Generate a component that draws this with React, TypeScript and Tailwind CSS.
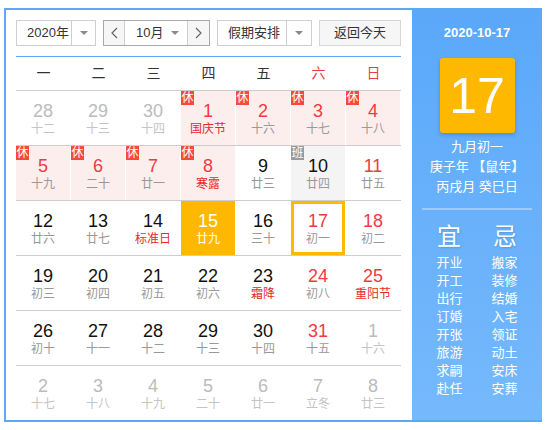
import React from "react";

type Cell = {
  d: number;
  l: string;
  other?: boolean;
  rest?: boolean;
  work?: boolean;
  red?: boolean;
  fest?: boolean;
  today?: boolean;
  sel?: boolean;
};

const rows: Cell[][] = [
  [
    { d: 28, l: "十二", other: true },
    { d: 29, l: "十三", other: true },
    { d: 30, l: "十四", other: true },
    { d: 1, l: "国庆节", rest: true, red: true, fest: true },
    { d: 2, l: "十六", rest: true, red: true },
    { d: 3, l: "十七", rest: true, red: true },
    { d: 4, l: "十八", rest: true, red: true },
  ],
  [
    { d: 5, l: "十九", rest: true, red: true },
    { d: 6, l: "二十", rest: true, red: true },
    { d: 7, l: "廿一", rest: true, red: true },
    { d: 8, l: "寒露", rest: true, red: true, fest: true },
    { d: 9, l: "廿三" },
    { d: 10, l: "廿四", work: true },
    { d: 11, l: "廿五", red: true },
  ],
  [
    { d: 12, l: "廿六" },
    { d: 13, l: "廿七" },
    { d: 14, l: "标准日", fest: true },
    { d: 15, l: "廿九", today: true },
    { d: 16, l: "三十" },
    { d: 17, l: "初一", red: true, sel: true },
    { d: 18, l: "初二", red: true },
  ],
  [
    { d: 19, l: "初三" },
    { d: 20, l: "初四" },
    { d: 21, l: "初五" },
    { d: 22, l: "初六" },
    { d: 23, l: "霜降", fest: true },
    { d: 24, l: "初八", red: true },
    { d: 25, l: "重阳节", red: true, fest: true },
  ],
  [
    { d: 26, l: "初十" },
    { d: 27, l: "十一" },
    { d: 28, l: "十二" },
    { d: 29, l: "十三" },
    { d: 30, l: "十四" },
    { d: 31, l: "十五", red: true },
    { d: 1, l: "十六", other: true },
  ],
  [
    { d: 2, l: "十七", other: true },
    { d: 3, l: "十八", other: true },
    { d: 4, l: "十九", other: true },
    { d: 5, l: "二十", other: true },
    { d: 6, l: "廿一", other: true },
    { d: 7, l: "立冬", other: true },
    { d: 8, l: "廿三", other: true },
  ],
];

const weekdays = ["一", "二", "三", "四", "五", "六", "日"];
const yi = ["开业", "开工", "出行", "订婚", "开张", "旅游", "求嗣", "赴任"];
const ji = ["搬家", "装修", "结婚", "入宅", "领证", "动土", "安床", "安葬"];

const font = { fontFamily: '"Liberation Sans", "Noto Sans CJK SC", sans-serif' };

function Tri() {
  return (
    <svg width="8" height="4" viewBox="0 0 8 4">
      <polygon points="0,0 8,0 4,4" fill="#8a8a8a" />
    </svg>
  );
}

function Chev({ dir }: { dir: "l" | "r" }) {
  return (
    <svg width="7" height="12" viewBox="0 0 7 12">
      <polyline
        points={dir === "l" ? "6,1 1,6 6,11" : "1,1 6,6 1,11"}
        fill="none"
        stroke="#666"
        strokeWidth="1.2"
      />
    </svg>
  );
}

function DayCell({ c }: { c: Cell }) {
  let bg = "bg-white";
  if (c.rest) bg = "bg-[#fdeeee]";
  if (c.work) bg = "bg-[#f4f4f4]";
  if (c.today) bg = "bg-[#ffb800]";
  let num = "text-[#111]";
  if (c.red) num = "text-[#ee3b3f]";
  if (c.other) num = "text-[#bbbbbb]";
  if (c.today) num = "text-white";
  let lun = "text-[#999]";
  if (c.fest) lun = "text-[#e8282c]";
  if (c.other) lun = "text-[#c4c4c4]";
  if (c.today) lun = "text-white";
  return (
    <div
      className={`relative h-[54px] flex flex-col items-center ${bg} ${
        c.sel ? "shadow-[inset_0_0_0_3px_#ffb800]" : ""
      }`}
    >
      {c.rest && (
        <div className="absolute left-0 top-0 w-[13px] h-[14px] bg-[#f64b3c] text-white text-[12px] leading-[14px] flex items-center justify-center">
          休
        </div>
      )}
      {c.work && (
        <div className="absolute left-0 top-0 w-[13px] h-[14px] bg-[#9a9a9a] text-white text-[12px] leading-[14px] flex items-center justify-center">
          班
        </div>
      )}
      <div className={`mt-[10px] text-[18px] leading-[20px] ${num}`}>{c.d}</div>
      <div className={`text-[12px] leading-[16px] ${lun}`}>{c.l}</div>
    </div>
  );
}

export default function App() {
  return (
    <div className="pl-[4px] pt-[8px]" style={font}>
      <div className="flex w-[538px] h-[414px] border-l-2 border-y-2 border-[#5ca9f8]">
        <div className="w-[406px] bg-white pl-[10px] pt-[10px]">
          <div className="flex gap-[7px] h-[26px] text-[13px] text-[#333]">
            <div className="w-[80px] flex border border-[#cfcfcf]">
              <div className="flex-1 pl-[10px] flex items-center">2020年</div>
              <div className="w-[24px] border-l border-[#cfcfcf] flex items-center justify-center">
                <Tri />
              </div>
            </div>
            <div className="w-[107px] flex border border-[#a9a9a9]">
              <div className="w-[21px] bg-[#f6f6f6] border-r border-[#cfcfcf] flex items-center justify-center">
                <Chev dir="l" />
              </div>
              <div className="flex-1 flex items-center pl-[11px] pr-[8px] justify-between">
                <span>10月</span>
                <Tri />
              </div>
              <div className="w-[22px] bg-[#f6f6f6] border-l border-[#cfcfcf] flex items-center justify-center">
                <Chev dir="r" />
              </div>
            </div>
            <div className="w-[95px] flex border border-[#cfcfcf]">
              <div className="flex-1 pl-[10px] flex items-center">假期安排</div>
              <div className="w-[25px] border-l border-[#cfcfcf] flex items-center justify-center">
                <Tri />
              </div>
            </div>
            <div className="w-[82px] border border-[#d6d6d6] bg-[#f6f6f6] flex items-center justify-center">
              返回今天
            </div>
          </div>
          <div className="mt-[10px] w-[385px] h-px bg-[#5ca9f8]" />
          <div className="w-[385px] h-[33px] grid grid-cols-7 text-[14px]">
            {weekdays.map((w, i) => (
              <div
                key={w}
                className={`flex items-center justify-center ${
                  i >= 5 ? "text-[#ee3b3f]" : "text-[#333]"
                }`}
              >
                {w}
              </div>
            ))}
          </div>
          {rows.map((r, ri) => (
            <div key={ri} className="w-[385px] border-t border-[#cccccc]">
              <div className="grid grid-cols-[repeat(7,54px)] gap-x-px">
                {r.map((c, ci) => (
                  <DayCell key={ci} c={c} />
                ))}
              </div>
            </div>
          ))}
        </div>
        <div className="w-[130px] h-[410px] bg-gradient-to-b from-[#5aa8fa] to-[#76b9fc] flex flex-col items-center text-white">
          <div className="mt-[13px] text-[13px] leading-[20px] font-bold">2020-10-17</div>
          <div className="mt-[15px] w-[75px] h-[75px] rounded-[3px] bg-[#ffb800] shadow-[0_2px_4px_rgba(0,0,0,0.18)] flex items-center justify-center text-[50px] leading-none">
            17
          </div>
          <div className="mt-[4px] text-[13px] leading-[20px]">九月初一</div>
          <div className="text-[13px] leading-[20px]">庚子年 【鼠年】</div>
          <div className="text-[13px] leading-[20px]">丙戌月 癸巳日</div>
          <div className="mt-[11px] w-[110px] h-[2px] bg-[#9ccbfc]" />
          <div className="mt-[12px] flex gap-[32px] text-[24px] leading-[30px] [text-shadow:1px_1px_2px_rgba(0,0,0,0.15)]">
            <span>宜</span>
            <span>忌</span>
          </div>
          <div className="mt-[2px] flex gap-[29px] text-[13px] leading-[18px]">
            <div className="flex flex-col">
              {yi.map((t) => (
                <span key={t}>{t}</span>
              ))}
            </div>
            <div className="flex flex-col">
              {ji.map((t) => (
                <span key={t}>{t}</span>
              ))}
            </div>
          </div>
        </div>
      </div>
    </div>
  );
}
